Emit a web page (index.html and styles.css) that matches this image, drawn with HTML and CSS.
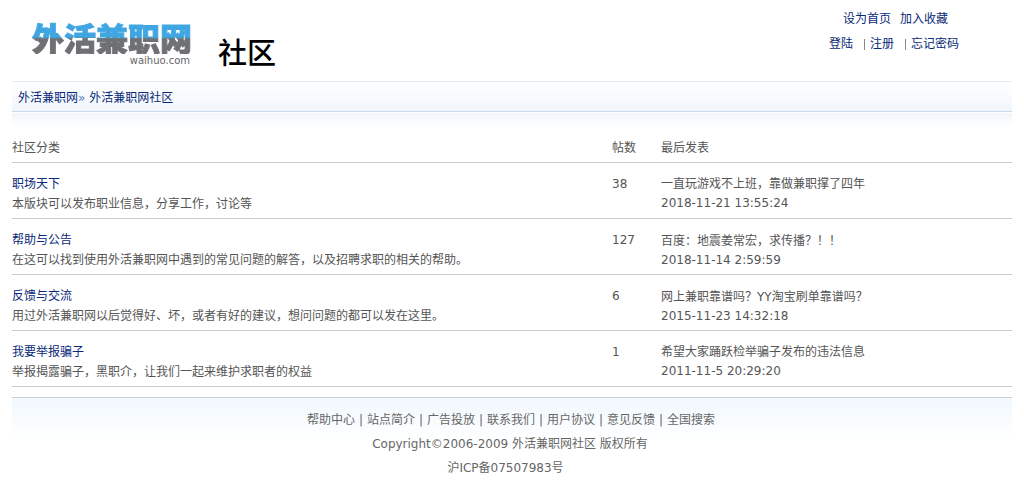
FILE: index.html
```html
<!DOCTYPE html>
<html lang="zh">
<head>
<meta charset="utf-8">
<title>外活兼职网社区</title>
<link rel="stylesheet" href="styles.css">
</head>
<body>
<div class="page">
  <header class="head">
    <div class="logo">
      <div class="logo-name">外活兼职网</div>
      <div class="logo-url">waihuo.com</div>
    </div>
    <h1 class="title">社区</h1>
    <div class="toplinks">
      <div class="row-a"><a href="#">设为首页</a><a href="#">加入收藏</a></div>
      <div class="row-b"><a href="#">登陆</a><span class="sep"></span><a href="#">注册</a><span class="sep"></span><a href="#">忘记密码</a></div>
    </div>
  </header>
  <nav class="crumb"><a href="#">外活兼职网</a><span class="arrow">»</span> <a href="#">外活兼职网社区</a></nav>
  <div class="crumb-fade"></div>
  <div class="grid">
    <div class="row th"><div>社区分类</div><div>帖数</div><div>最后发表</div></div>
    <div class="row">
      <div class="c1"><a href="#">职场天下</a><p>本版块可以发布职业信息，分享工作，讨论等</p></div>
      <div class="c2">38</div>
      <div class="c3"><div>一直玩游戏不上班，靠做兼职撑了四年</div><div class="date">2018-11-21 13:55:24</div></div>
    </div>
    <div class="row">
      <div class="c1"><a href="#">帮助与公告</a><p>在这可以找到使用外活兼职网中遇到的常见问题的解答，以及招聘求职的相关的帮助。</p></div>
      <div class="c2">127</div>
      <div class="c3"><div>百度：地震姜常宏，求传播<span class="mark">？！！</span></div><div class="date">2018-11-14 2:59:59</div></div>
    </div>
    <div class="row">
      <div class="c1"><a href="#">反馈与交流</a><p>用过外活兼职网以后觉得好、坏，或者有好的建议，想问问题的都可以发在这里。</p></div>
      <div class="c2">6</div>
      <div class="c3"><div>网上兼职靠谱吗<span class="mark">？</span>YY淘宝刷单靠谱吗<span class="mark">？</span></div><div class="date">2015-11-23 14:32:18</div></div>
    </div>
    <div class="row">
      <div class="c1"><a href="#">我要举报骗子</a><p>举报揭露骗子，黑职介，让我们一起来维护求职者的权益</p></div>
      <div class="c2">1</div>
      <div class="c3"><div>希望大家踊跃检举骗子发布的违法信息</div><div class="date">2011-11-5 20:29:20</div></div>
    </div>
  </div>
  <footer class="foot">
    <div class="foot-links">帮助中心 | 站点简介 | 广告投放 | 联系我们 | 用户协议 | 意见反馈 | 全国搜索</div>
    <div class="copy">Copyright©2006-2009 外活兼职网社区 版权所有</div>
    <div class="icp">沪ICP备07507983号</div>
  </footer>
</div>
</body>
</html>
```
FILE: styles.css
```css
* { box-sizing: border-box; }
html, body { margin: 0; padding: 0; background: #fff; }
body { font: 12px/20px "DejaVu Sans", "Noto Sans CJK SC", sans-serif; color: #555; overflow: hidden; }
a { color: #0a2a78; text-decoration: none; }
p { margin: 0; }
.page { width: 1000px; margin-left: 12px; }
.head { height: 81px; display: flex; position: relative; }
.logo { width: 206px; padding: 20px 0 0 20px; display: flex; flex-direction: column; }
.logo-name {
  font: 900 32px/34px "Noto Sans CJK SC", sans-serif;
  width: 161px;
  white-space: nowrap;
  color: transparent;
  -webkit-text-stroke: 1px transparent;
  background: linear-gradient(180deg, #3fa6e2 0, #3fa6e2 17px, #6e7073 19px, #6e7073 34px);
  -webkit-background-clip: text;
  background-clip: text;
}
.logo-url { width: 158px; text-align: right; font: 10px/13px "DejaVu Sans", sans-serif; color: #666; }
.title { margin: 33px 0 0; font: 500 29px/36px "Noto Sans CJK SC", serif; color: #000; }
.toplinks { position: absolute; left: 817px; top: 9px; width: 135px; }
.row-a { padding-left: 14px; display: flex; gap: 9px; height: 25px; }
.row-b { display: flex; align-items: center; height: 20px; }
.sep { width: 1px; height: 11px; background: #888; margin: 0 5px 0 11px; }
.crumb { height: 31px; line-height: 31px; padding: 1px 0 0 6px; border-top: 1px solid #e4edf4; border-bottom: 1px solid #c6daec; background: linear-gradient(180deg, #fff 0, #f1f6fc 100%); }
.arrow { color: #5c7cc0; }
.crumb-fade { height: 16px; margin-top: 1px; background: linear-gradient(180deg, #f2f7fc 0, #fff 100%); }
.grid { margin-top: 1px; }
.row { display: grid; grid-template-columns: 600px 49px 1fr; height: 56px; padding-top: 11px; border-bottom: 1px solid #ccc; }
.row.th { height: 33px; padding-top: 8px; }
.date { margin-top: -1px; }
.mark { font-family: "Noto Sans CJK TC", sans-serif; }
.foot { margin-top: 10px; border-top: 1px solid #c3d3d8; height: 90px; text-align: center; padding-top: 10px; color: #666; line-height: 24px; background: linear-gradient(180deg, #f1f8fe 0, #fff 44px); }
.foot-links { padding-right: 2px; word-spacing: .17px; }
.copy { padding-right: 4px; }
.icp { padding-right: 13px; }
```
